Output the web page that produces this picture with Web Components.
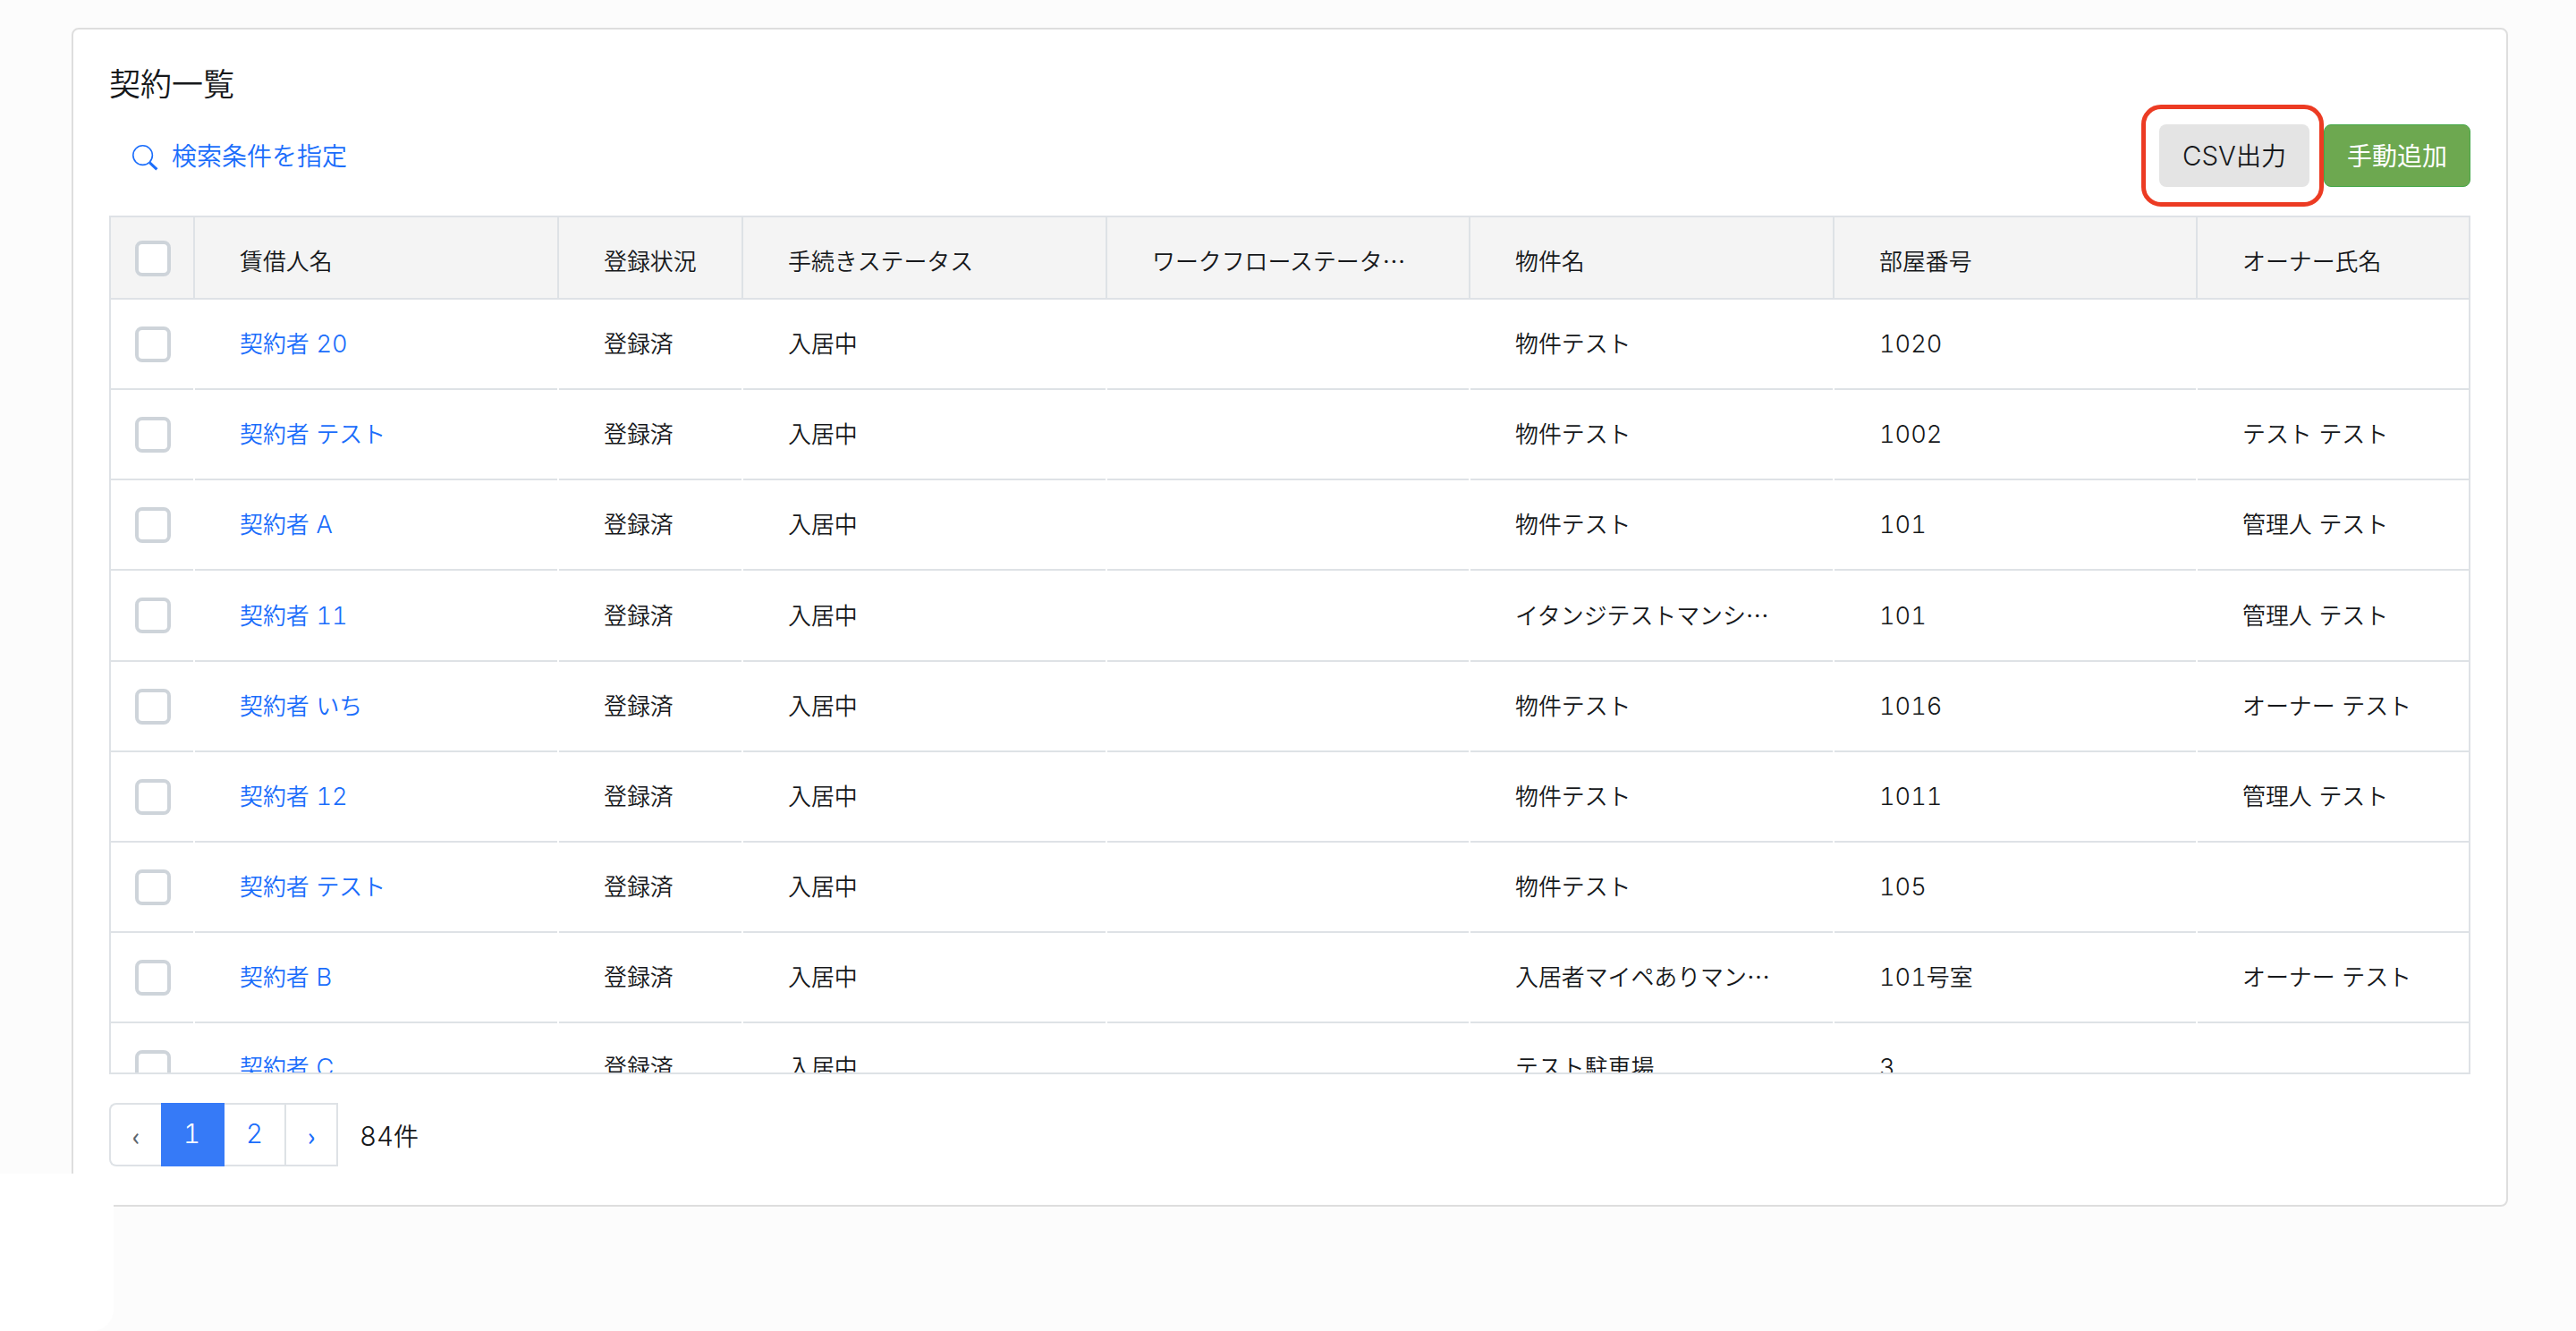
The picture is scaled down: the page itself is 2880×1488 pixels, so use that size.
<!DOCTYPE html>
<html lang="ja">
<head>
<meta charset="utf-8">
<title>契約一覧</title>
<style>
html,body{margin:0;height:100%}
body{background:#fcfcfc;overflow:hidden;color:#16181b;font-family:"Noto Sans CJK JP",sans-serif;font-weight:350;font-size:25.9px;line-height:1.5}
</style>
</head>
<body>
<contract-page></contract-page>
<script>
const define = (name, css, html, setup) => {
  const tpl = document.createElement('template');
  tpl.innerHTML = `<style>*{box-sizing:border-box}:host{box-sizing:border-box}${css}</style>${html}`;
  customElements.define(name, class extends HTMLElement {
    constructor() {
      super();
      this.attachShadow({mode: 'open'}).append(tpl.content.cloneNode(true));
    }
    connectedCallback() { if (setup) setup(this, this.shadowRoot); }
  });
};

// Wraps latin letters and digits so that they get their own face and size.
const mixed = s => s.replace(/[A-Za-z0-9]+/g, '<span class="latin">$&</span>');
const LATIN = '.latin{font-family:Inter,sans-serif;font-weight:300;font-size:1.05em;line-height:1;font-feature-settings:"tnum"}';

define('mixed-text', `:host{display:inline-block;white-space:pre;word-spacing:2px}${LATIN}`, '<span class="t"></span>', (el, root) => {
  root.querySelector('.t').innerHTML = mixed(el.getAttribute('text') || '');
});

define('check-box', ':host{display:block;width:40px;height:40px;border:4px solid #ced4da;border-radius:8px;background:#fff}', '');

define('search-link', `
:host{display:flex;align-items:center;color:#1a6dfb;font-size:28px;padding-left:26px}
span{padding-bottom:2px}
svg{width:29px;height:29px;margin:4px 15px 0 0}`,
`<svg viewBox="0 0 29 29" fill="none" stroke="currentColor"><circle cx="11.6" cy="11.6" r="10.8" stroke-width="1.6"/><path d="M19.4 19.8L27.4 27.4" stroke-width="3"/></svg><span><slot></slot></span>`);

define('action-button', `
:host{display:flex;align-items:center;justify-content:center;height:70px;border-radius:8px;font-size:28px;width:168px;padding-bottom:2px;background:#e4e4e4;position:relative}
:host([kind=add]){width:164px;background:#6da850;color:#fff;border:1px solid #45a849;font-weight:400}
:host([marked])::after{content:"";position:absolute;left:-20px;top:-22px;width:204px;height:114px;border:5px solid #ec3b23;border-radius:22px;box-sizing:border-box;z-index:1}`,
'<slot></slot>');

const COLS = '94px 407px 206px 407px 406px 407px 406px 303px';

define('table-head', `
:host{display:grid;grid-template-columns:${COLS};height:92px;background:#f4f4f4;border-bottom:2px solid #dee2e6;flex:none}
div{border-right:2px solid #dee2e6;padding:7px 0 0 50px;display:flex;align-items:center;white-space:pre}
.check{padding:2px 0 0 27px}
div:last-child{border-right:0}`, '<div class="check"><check-box></check-box></div>', (el, root) => {
  for (const label of el.getAttribute('labels').split('|')) {
    const d = document.createElement('div');
    d.textContent = label;
    root.append(d);
  }
});

define('table-row', `
:host{display:grid;grid-template-columns:${COLS};height:101.15px;flex:none}
div{border-bottom:2px solid #dee2e6;margin-right:2px;padding:0 0 2px 50px;display:flex;align-items:center}
.check{padding:1px 0 0 27px}
.name{color:#1a6dfb}
div:last-child{margin-right:0}`, '<div class="check"><check-box></check-box></div>', (el, root) => {
  el.getAttribute('cells').split('|').forEach((value, i) => {
    const d = document.createElement('div');
    if (i === 0) d.className = 'name';
    const t = document.createElement('mixed-text');
    t.setAttribute('text', value);
    d.append(t);
    root.append(d);
  });
});

define('contract-table', ':host{display:flex;flex-direction:column;height:960px;border:2px solid #dee2e6;overflow:hidden;margin-top:32px}', '<table-head labels="賃借人名|登録状況|手続きステータス|ワークフローステータ…|物件名|部屋番号|オーナー氏名"></table-head>', (el, root) => {
  const rows = [
    ['契約者 20', '物件テスト', '1020', ''],
    ['契約者 テスト', '物件テスト', '1002', 'テスト テスト'],
    ['契約者 A', '物件テスト', '101', '管理人 テスト'],
    ['契約者 11', 'イタンジテストマンシ…', '101', '管理人 テスト'],
    ['契約者 いち', '物件テスト', '1016', 'オーナー テスト'],
    ['契約者 12', '物件テスト', '1011', '管理人 テスト'],
    ['契約者 テスト', '物件テスト', '105', ''],
    ['契約者 B', '入居者マイペありマン…', '101号室', 'オーナー テスト'],
    ['契約者 C', 'テスト駐車場', '3', '']
  ];
  for (const [name, building, room, owner] of rows) {
    const r = document.createElement('table-row');
    r.setAttribute('cells', [name, '登録済', '入居中', '', building, room, owner].join('|'));
    root.append(r);
  }
});

define('page-nav', `
:host{display:flex;align-items:center;margin-top:32px;font-size:28px}
nav{display:flex;height:71px;color:#1a6dfb;line-height:1}
nav div{display:flex;align-items:center;justify-content:center;border:2px solid #dee2e6;border-left:0;padding-bottom:3px}
.prev{width:58px;border-left:2px solid #dee2e6!important;border-right:0!important;border-radius:8px 0 0 8px;color:#5c656e}
nav .on{width:71px;background:#367af7;border-color:#367af7;color:#fff}
.two{width:69px}.next{width:58px}
.prev,.next{padding-bottom:0!important;font-weight:500}
mixed-text{margin-left:24px}`,
`<nav><div class="prev">‹</div><div class="on"><mixed-text text="1" style="margin:0"></mixed-text></div><div class="two"><mixed-text text="2" style="margin:0"></mixed-text></div><div class="next">›</div></nav><mixed-text text="84件"></mixed-text>`);

define('contract-card', `
:host{display:block;width:2724px;height:1318px;border:2px solid #dedede;border-radius:8px;background:#fff;padding:39px 40px 0}
h1{margin:0;font-size:35px;font-weight:350;line-height:40px;height:40px}
.bar{display:flex;height:70px;margin-top:27px;justify-content:space-between}
.acts{display:flex;gap:16px}`,
`<h1>契約一覧</h1>
<div class="bar"><search-link>検索条件を指定</search-link><div class="acts"><action-button marked><mixed-text text="CSV出力"></mixed-text></action-button><action-button kind="add">手動追加</action-button></div></div>
<contract-table></contract-table><page-nav></page-nav>`);

define('contract-page', `
:host{display:block;position:relative;height:1488px;padding:31px 0 0 80px}
.patch{position:absolute;left:0;top:1312px;width:127px;height:176px;background:#fff;border-radius:0 0 24px 0}`,
'<contract-card></contract-card><div class="patch"></div>');
</script>
</body>
</html>
